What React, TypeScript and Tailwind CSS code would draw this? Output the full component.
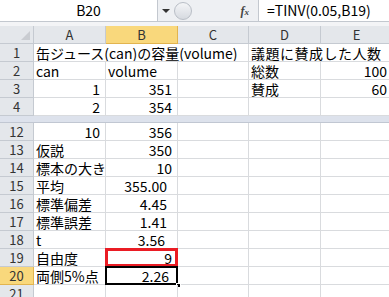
import React from "react";

const font = { fontFamily: '"Noto Sans CJK JP", "Liberation Sans", sans-serif' };

type Row = { n: string; a?: string; b?: string; d?: string; e?: string; aNum?: boolean; bText?: boolean; bPad?: string };

const top: Row[] = [
  { n: "1", a: "缶ジュース(can)の容量(volume)", d: "議題に賛成した人数" },
  { n: "2", a: "can", b: "volume", bText: true, d: "総数", e: "100" },
  { n: "3", a: "1", b: "351", aNum: true, d: "賛成", e: "60" },
  { n: "4", a: "2", b: "354", aNum: true },
];

const bottom: Row[] = [
  { n: "12", a: "10", b: "356", aNum: true },
  { n: "13", a: "仮説", b: "350" },
  { n: "14", a: "標本の大き", b: "10" },
  { n: "15", a: "平均", b: "355.00", bPad: "pr-[10px]" },
  { n: "16", a: "標準偏差", b: "4.45", bPad: "pr-[10px]" },
  { n: "17", a: "標準誤差", b: "1.41", bPad: "pr-[10px]" },
  { n: "18", a: "t", b: "3.56", bPad: "pr-[12px]" },
  { n: "19", a: "自由度", b: "9" },
  { n: "20", a: "両側5%点", b: "2.26", bPad: "pr-[8px]" },
  { n: "21" },
];

function Cell({ w, children, right, className = "" }: { w: string; children?: React.ReactNode; right?: boolean; className?: string }) {
  return (
    <div
      className={`${w} shrink-0 h-full border-r border-b border-[#d9dbde] flex items-center whitespace-nowrap overflow-hidden pl-[2px] ${right ? "justify-end pr-[5px]" : ""} ${className}`}
    >
      {children}
    </div>
  );
}

function SheetRow({ r }: { r: Row }) {
  const active = r.n === "20";
  const spill = r.n === "1";
  return (
    <div className="flex h-[18px] text-[14px] text-black leading-[16px]">
      <div
        className={`w-[34px] shrink-0 h-full flex items-center justify-center border-r border-b text-[13px] text-[#333] ${
          active ? "bg-[#f9d87c] border-[#e2b44f]" : "bg-[#e4e7eb] border-[#c5cad1]"
        }`}
      >
        {r.n}
      </div>
      {spill ? (
        <Cell w="w-[215px]">{r.a}</Cell>
      ) : (
        <>
          <Cell w="w-[72px]" right={r.aNum}>{r.a}</Cell>
          <div className="relative w-[72px] shrink-0 h-full">
            <Cell w="w-[72px]" right={!r.bText} className={r.bPad ?? ""}>{r.b}</Cell>
            {r.n === "19" && (
              <div className="absolute left-[-1px] top-[-1px] w-[73px] h-[19px] border-[3px] border-[#ea1c24]" />
            )}
            {r.n === "20" && (
              <>
                <div className="absolute left-[-1px] top-[-1px] w-[73px] h-[19px] border-2 border-black" />
                <div className="absolute right-[-3px] bottom-[-3px] w-[5px] h-[5px] bg-black border border-white" />
              </>
            )}
          </div>
          <Cell w="w-[71px]" />
        </>
      )}
      {spill ? (
        <Cell w="w-[144px]" className="tracking-[0.5px]">{r.d}</Cell>
      ) : (
        <>
          <Cell w="w-[72px]">{r.d}</Cell>
          <Cell w="w-[72px]" right>{r.e}</Cell>
        </>
      )}
    </div>
  );
}

export default function App() {
  return (
    <div className="w-[389px] h-[297px] overflow-hidden bg-white" style={font}>
      {/* formula bar */}
      <div className="flex h-[22px] bg-[#eef0f3] border-b border-[#c3c8cf]">
        <div className="w-[158px] h-[21px] bg-white border-r border-[#c3c8cf] flex items-center justify-center text-[14px] pl-[20px]">
          B20
        </div>
        <div className="w-[16px] flex items-center justify-center">
          <div className="w-0 h-0 border-l-[4px] border-r-[4px] border-t-[4px] border-l-transparent border-r-transparent border-t-[#333]" />
        </div>
        <div className="flex items-center">
          <div className="w-[18px] h-[18px] rounded-full border border-[#b9bec6] bg-gradient-to-b from-[#f4f5f7] to-[#d6dae0]" />
        </div>
        <div className="flex-1 flex items-center justify-end pr-[9px]">
          <span className="italic font-bold text-[12px] text-[#444]" style={{ fontFamily: '"Liberation Serif", serif' }}>
            f<span className="text-[9px]">x</span>
          </span>
        </div>
        <div className="w-[131px] h-full bg-white border-l border-[#c3c8cf] flex items-center pl-[8px] text-[14px]">
          =TINV(0.05,B19)
        </div>
      </div>
      <div className="h-[4px] bg-[#f3f4f6]" />
      {/* column headers */}
      <div className="flex h-[18px] text-[13px] text-[#333] leading-[16px]">
        <div className="w-[34px] shrink-0 bg-[#e4e7eb] border-r border-b border-[#c5cad1] relative">
          <div className="absolute right-[3px] bottom-[3px] w-0 h-0 border-b-[9px] border-l-[9px] border-b-[#c9ccd1] border-l-transparent" />
        </div>
        <div className="w-[72px] shrink-0 bg-[#e4e7eb] border-r border-b border-[#c5cad1] flex items-center justify-center">A</div>
        <div className="w-[72px] shrink-0 bg-[#f9d87c] border-r border-b border-[#e2b44f] flex items-center justify-center">B</div>
        <div className="w-[71px] shrink-0 bg-[#e4e7eb] border-r border-b border-[#c5cad1] flex items-center justify-center">C</div>
        <div className="w-[72px] shrink-0 bg-[#e4e7eb] border-r border-b border-[#c5cad1] flex items-center justify-center">D</div>
        <div className="w-[72px] shrink-0 bg-[#e4e7eb] border-r border-b border-[#c5cad1] flex items-center justify-center">E</div>
      </div>
      {top.map((r) => (
        <SheetRow key={r.n} r={r} />
      ))}
      {/* frozen pane split */}
      <div className="h-[7px] bg-[#dde2ec] border-b border-[#c1c7d2]" />
      {bottom.map((r) => (
        <SheetRow key={r.n} r={r} />
      ))}
    </div>
  );
}
